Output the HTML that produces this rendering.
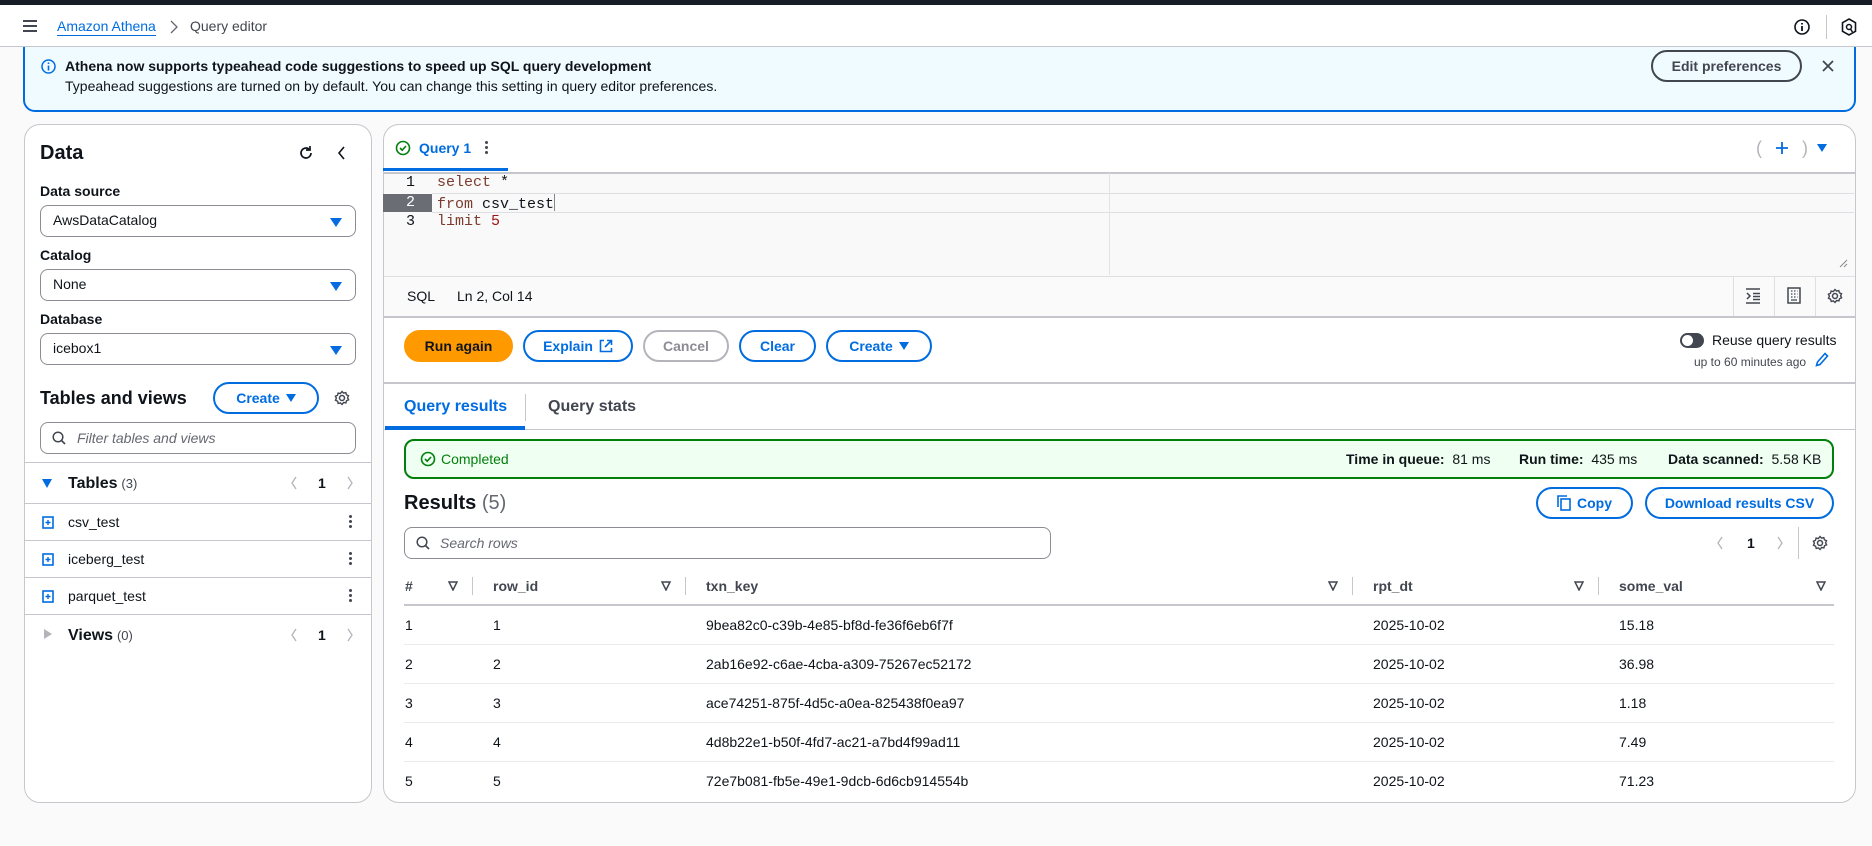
<!DOCTYPE html>
<html><head><meta charset="utf-8">
<style>
*{box-sizing:border-box;margin:0;padding:0}
body{width:1872px;height:846px;background:#fafafa;font-family:"Liberation Sans",sans-serif;font-size:14px;color:#0f141a;position:relative;overflow:hidden}
.a{position:absolute}
.t{position:absolute;white-space:nowrap;line-height:18px}
.b{font-weight:bold}
.blue{color:#006ce0}
.btn{position:absolute;border:2px solid #006ce0;border-radius:20px;color:#006ce0;font-weight:bold;display:flex;align-items:center;justify-content:center;gap:6px;background:#fff}
.sel{position:absolute;left:40px;width:316px;height:32px;border:1px solid #8c8c94;border-radius:8px;background:#fff}
.sel span{position:absolute;left:12px;top:6px}
.caret{position:absolute;width:0;height:0;border-left:6px solid transparent;border-right:6px solid transparent;border-top:9px solid #006ce0}
.hl{position:absolute;height:1px;background:#c6c6cd}
.mono{font-family:"Liberation Mono",monospace}
</style></head><body>
<div class="a" style="left:0;top:0;width:1872px;height:5px;background:#161d26"></div>
<div class="a" style="left:0;top:5px;width:1872px;height:42px;background:#fff;border-bottom:1px solid #c6c6cd"></div>
<!-- hamburger -->
<div class="a" style="left:23px;top:20px;width:14px;height:2px;background:#424650;box-shadow:0 5px 0 #424650,0 10px 0 #424650"></div>
<div class="t blue" style="left:57px;top:17px;border-bottom:1px solid #006ce0">Amazon Athena</div>
<svg class="a" style="left:169px;top:20px" width="10" height="14"><path d="M2 1l6 6-6 6" fill="none" stroke="#656871" stroke-width="1.3"/></svg>
<div class="t" style="left:190px;top:17px;color:#424650">Query editor</div>
<svg class="a" style="left:1794px;top:19px" width="16" height="16"><circle cx="8" cy="8" r="7" fill="none" stroke="#0f141a" stroke-width="1.6"/><path d="M8 7v5M8 4v1.5" stroke="#0f141a" stroke-width="1.8"/></svg>
<div class="a" style="left:1826px;top:15px;width:1px;height:24px;background:#c6c6cd"></div>
<svg class="a" style="left:1841px;top:18px" width="16" height="18"><path d="M8 1l6.5 3.7v8.6L8 17l-6.5-3.7V4.7z" fill="none" stroke="#0f141a" stroke-width="1.6"/><circle cx="8" cy="9" r="2.5" fill="none" stroke="#0f141a" stroke-width="1.5"/><path d="M9.5 11l2 3" stroke="#0f141a" stroke-width="1.5"/></svg>

<!-- banner -->
<div class="a" style="left:23px;top:36px;width:1833px;height:76px;background:#f0fbff;border:2px solid #006ce0;border-radius:12px"></div>
<div class="a" style="left:0;top:6px;width:1872px;height:41px;background:#fff;border-bottom:1px solid #c6c6cd"></div>
<div class="a" style="left:0;top:0;width:1872px;height:5px;background:#161d26"></div>
<div class="a" style="left:23px;top:20px;width:14px;height:2px;background:#424650;box-shadow:0 5px 0 #424650,0 10px 0 #424650"></div>
<div class="t blue" style="left:57px;top:17px;border-bottom:1px solid #006ce0">Amazon Athena</div>
<svg class="a" style="left:169px;top:20px" width="10" height="14"><path d="M2 1l6 6-6 6" fill="none" stroke="#656871" stroke-width="1.3"/></svg>
<div class="t" style="left:190px;top:17px;color:#424650">Query editor</div>
<svg class="a" style="left:1794px;top:19px" width="16" height="16"><circle cx="8" cy="8" r="7" fill="none" stroke="#0f141a" stroke-width="1.6"/><path d="M8 7v5M8 4v1.5" stroke="#0f141a" stroke-width="1.8"/></svg>
<div class="a" style="left:1826px;top:15px;width:1px;height:24px;background:#c6c6cd"></div>
<svg class="a" style="left:1841px;top:18px" width="16" height="18"><path d="M8 1l6.5 3.7v8.6L8 17l-6.5-3.7V4.7z" fill="none" stroke="#0f141a" stroke-width="1.6"/><circle cx="8" cy="9" r="2.5" fill="none" stroke="#0f141a" stroke-width="1.5"/><path d="M9.5 11l2 3" stroke="#0f141a" stroke-width="1.5"/></svg>

<svg class="a" style="left:41px;top:59px" width="15" height="15"><circle cx="7.5" cy="7.5" r="6.5" fill="none" stroke="#006ce0" stroke-width="1.5"/><path d="M7.5 6.5v5M7.5 3.5v1.5" stroke="#006ce0" stroke-width="1.6"/></svg>
<div class="t b" style="left:65px;top:57px">Athena now supports typeahead code suggestions to speed up SQL query development</div>
<div class="t" style="left:65px;top:77px">Typeahead suggestions are turned on by default. You can change this setting in query editor preferences.</div>
<div class="btn" style="left:1651px;top:50px;width:151px;height:32px;border-color:#424650;color:#424650;background:transparent">Edit preferences</div>
<svg class="a" style="left:1822px;top:60px" width="12" height="12"><path d="M1 1l10 10M11 1L1 11" stroke="#424650" stroke-width="1.8"/></svg>

<!-- left panel -->
<div class="a" style="left:24px;top:124px;width:348px;height:679px;background:#fff;border:1px solid #c6c6cd;border-radius:16px"></div>
<div class="t b" style="left:40px;top:141px;font-size:20px;line-height:24px">Data</div>
<svg class="a" style="left:298px;top:145px" width="16" height="16"><path d="M13 8a5 5 0 1 1-2-4" fill="none" stroke="#0f141a" stroke-width="1.7"/><path d="M12 1v4H8" fill="none" stroke="#0f141a" stroke-width="1.7"/></svg>
<svg class="a" style="left:337px;top:146px" width="10" height="14"><path d="M7 1L2 7l5 6" fill="none" stroke="#0f141a" stroke-width="1.6"/></svg>
<div class="t b" style="left:40px;top:182px">Data source</div>
<div class="sel" style="top:205px"><span>AwsDataCatalog</span><i class="caret" style="left:289px;top:12px"></i></div>
<div class="t b" style="left:40px;top:246px">Catalog</div>
<div class="sel" style="top:269px"><span>None</span><i class="caret" style="left:289px;top:12px"></i></div>
<div class="t b" style="left:40px;top:310px">Database</div>
<div class="sel" style="top:333px"><span>icebox1</span><i class="caret" style="left:289px;top:12px"></i></div>
<div class="t b" style="left:40px;top:387px;font-size:18px;line-height:22px">Tables and views</div>
<div class="btn" style="left:213px;top:382px;width:106px;height:32px">Create <i class="caret" style="position:static;border-left-width:5px;border-right-width:5px;border-top-width:8px"></i></div>
<svg class="a" style="left:334px;top:390px" width="16" height="16"><circle cx="8" cy="8" r="2.5" fill="none" stroke="#424650" stroke-width="1.5"/><path d="M8 1.5l1.6 1.6 2.2-.5.6 2.2 2.1.9-.9 2.1 1 2-2.1.9-.6 2.2-2.2-.5L8 14.5l-1.6-1.6-2.2.5-.6-2.2-2.1-.9.9-2.1-1-2 2.1-.9.6-2.2 2.2.5z" fill="none" stroke="#424650" stroke-width="1.4"/></svg>
<div class="sel" style="top:422px;height:32px"></div>
<svg class="a" style="left:52px;top:431px" width="14" height="14"><circle cx="6" cy="6" r="4.8" fill="none" stroke="#424650" stroke-width="1.5"/><path d="M9.5 9.5l3.5 3.5" stroke="#424650" stroke-width="1.6"/></svg>
<div class="t" style="left:77px;top:429px;font-style:italic;color:#656871">Filter tables and views</div>
<div class="hl" style="left:25px;top:462px;width:346px"></div>
<i class="caret" style="left:42px;top:479px;border-left-width:5px;border-right-width:5px;border-top-width:9px"></i>
<div class="t" style="left:68px;top:474px"><b style="font-size:16px">Tables</b> <span style="color:#424650;font-size:13px">(3)</span></div>
<svg class="a" style="left:290px;top:476px" width="8" height="14"><path d="M6 1L2 7l4 6" fill="none" stroke="#b4b4bb" stroke-width="1.3"/></svg>
<div class="t b" style="left:318px;top:474px">1</div>
<svg class="a" style="left:346px;top:476px" width="8" height="14"><path d="M2 1l4 6-4 6" fill="none" stroke="#b4b4bb" stroke-width="1.3"/></svg>
<div class="hl" style="left:25px;top:503px;width:346px"></div>
<div class="hl" style="left:25px;top:540px;width:346px"></div>
<div class="hl" style="left:25px;top:577px;width:346px"></div>
<div class="hl" style="left:25px;top:614px;width:346px"></div>
<!-- table rows -->
<svg class="a" style="left:42px;top:516px" width="12" height="13"><rect x="1" y="1" width="10" height="11" fill="none" stroke="#006ce0" stroke-width="1.6"/><path d="M6 4v5M3.5 6.5h5" stroke="#006ce0" stroke-width="1.4"/></svg>
<div class="t" style="left:68px;top:513px">csv_test</div>
<div class="a" style="left:349px;top:515px;width:3px;height:3px;background:#424650;border-radius:50%;box-shadow:0 5px 0 #424650,0 10px 0 #424650"></div>
<svg class="a" style="left:42px;top:553px" width="12" height="13"><rect x="1" y="1" width="10" height="11" fill="none" stroke="#006ce0" stroke-width="1.6"/><path d="M6 4v5M3.5 6.5h5" stroke="#006ce0" stroke-width="1.4"/></svg>
<div class="t" style="left:68px;top:550px">iceberg_test</div>
<div class="a" style="left:349px;top:552px;width:3px;height:3px;background:#424650;border-radius:50%;box-shadow:0 5px 0 #424650,0 10px 0 #424650"></div>
<svg class="a" style="left:42px;top:590px" width="12" height="13"><rect x="1" y="1" width="10" height="11" fill="none" stroke="#006ce0" stroke-width="1.6"/><path d="M6 4v5M3.5 6.5h5" stroke="#006ce0" stroke-width="1.4"/></svg>
<div class="t" style="left:68px;top:587px">parquet_test</div>
<div class="a" style="left:349px;top:589px;width:3px;height:3px;background:#424650;border-radius:50%;box-shadow:0 5px 0 #424650,0 10px 0 #424650"></div>
<i class="a" style="left:44px;top:629px;border-top:5px solid transparent;border-bottom:5px solid transparent;border-left:8px solid #b4b4bb"></i>
<div class="t" style="left:68px;top:626px"><b style="font-size:16px">Views</b> <span style="color:#424650;font-size:13px">(0)</span></div>
<svg class="a" style="left:290px;top:628px" width="8" height="14"><path d="M6 1L2 7l4 6" fill="none" stroke="#b4b4bb" stroke-width="1.3"/></svg>
<div class="t b" style="left:318px;top:626px">1</div>
<svg class="a" style="left:346px;top:628px" width="8" height="14"><path d="M2 1l4 6-4 6" fill="none" stroke="#b4b4bb" stroke-width="1.3"/></svg>

<!-- right panel -->
<div class="a" style="left:383px;top:124px;width:1473px;height:679px;background:#fff;border:1px solid #c6c6cd;border-radius:16px;overflow:hidden">
  <div class="a" style="left:0;top:47px;width:1473px;height:104px;background:#f9f9f9;border-top:2px solid #c6c6cd"></div>
  <div class="a" style="left:0;top:151px;width:1473px;height:42px;background:#fafafa;border-top:1px solid #dedee3;border-bottom:2px solid #c6c6cd"></div>
</div>
<!-- tab -->
<svg class="a" style="left:395px;top:140px" width="16" height="16"><circle cx="8" cy="8" r="6.5" fill="none" stroke="#037f0c" stroke-width="1.6"/><path d="M5 8l2.2 2.2L11 6" fill="none" stroke="#037f0c" stroke-width="1.6"/></svg>
<div class="t b blue" style="left:419px;top:139px">Query 1</div>
<div class="a" style="left:485px;top:141px;width:3px;height:3px;background:#424650;border-radius:50%;box-shadow:0 5px 0 #424650,0 10px 0 #424650"></div>
<div class="a" style="left:383px;top:168px;width:125px;height:3px;background:#006ce0"></div>
<div class="t" style="left:1756px;top:137px;color:#b4b4bb;font-size:18px;line-height:22px">(</div>
<svg class="a" style="left:1775px;top:141px" width="14" height="14"><path d="M7 1v12M1 7h12" stroke="#006ce0" stroke-width="1.8"/></svg>
<div class="t" style="left:1802px;top:137px;color:#b4b4bb;font-size:18px;line-height:22px">)</div>
<i class="caret" style="left:1817px;top:144px;border-left-width:5px;border-right-width:5px;border-top-width:8px"></i>
<!-- editor -->
<div class="a" style="left:432px;top:193px;width:1422px;height:1px;background:#dedee3"></div>
<div class="a" style="left:432px;top:212px;width:1422px;height:1px;background:#dedee3"></div>
<div class="a" style="left:1109px;top:173px;width:1px;height:102px;background:#e3e3e6"></div>
<div class="a" style="left:383px;top:194px;width:49px;height:18px;background:#6b6d75"></div>
<div class="a" style="left:383px;top:173px;width:49px;height:102px;background:#f4f4f4;z-index:-1"></div>
<div class="t mono" style="left:406px;top:174px;font-size:15px">1</div>
<div class="t mono" style="left:406px;top:194px;font-size:15px;color:#fff">2</div>
<div class="t mono" style="left:406px;top:213px;font-size:15px">3</div>
<div class="t mono" style="left:437px;top:174px;font-size:15px"><span style="color:#7b3b2e">select</span> *</div>
<div class="t mono" style="left:437px;top:194px;font-size:15px"><span style="color:#7b3b2e">from</span> csv_test<span style="display:inline-block;width:1px;height:17px;background:#888;vertical-align:-3px"></span></div>
<div class="t mono" style="left:437px;top:213px;font-size:15px"><span style="color:#7b3b2e">limit</span> <span style="color:#a31515">5</span></div>
<svg class="a" style="left:1838px;top:258px" width="10" height="10"><path d="M9 2L2 9M9 6L6 9" stroke="#888" stroke-width="1"/></svg>
<div class="t" style="left:407px;top:287px">SQL</div>
<div class="t" style="left:457px;top:287px">Ln 2, Col 14</div>
<div class="a" style="left:1733px;top:276px;width:1px;height:40px;background:#dedee3"></div>
<div class="a" style="left:1774px;top:276px;width:1px;height:40px;background:#dedee3"></div>
<div class="a" style="left:1815px;top:276px;width:1px;height:40px;background:#dedee3"></div>
<svg class="a" style="left:1745px;top:288px" width="16" height="16"><path d="M1 1h14M1 15h14M8 5.5h7M8 8.5h7M8 11.5h7M2 5l3 3-3 3" fill="none" stroke="#424650" stroke-width="1.5"/></svg>
<svg class="a" style="left:1787px;top:287px" width="14" height="17"><rect x="1" y="1" width="12" height="15" fill="none" stroke="#424650" stroke-width="1.5"/><path d="M4 4h1.5M7 4h1.5M10 4h.5M4 7h1.5M7 7h1.5M10 7h.5M4 10h1.5M7 10h1.5M10 10h.5M4 13h6" stroke="#424650" stroke-width="1.3"/></svg>
<svg class="a" style="left:1827px;top:288px" width="16" height="16"><circle cx="8" cy="8" r="2.5" fill="none" stroke="#424650" stroke-width="1.5"/><path d="M8 1.5l1.6 1.6 2.2-.5.6 2.2 2.1.9-.9 2.1 1 2-2.1.9-.6 2.2-2.2-.5L8 14.5l-1.6-1.6-2.2.5-.6-2.2-2.1-.9.9-2.1-1-2 2.1-.9.6-2.2 2.2.5z" fill="none" stroke="#424650" stroke-width="1.4"/></svg>
<!-- buttons -->
<div class="btn" style="left:404px;top:330px;width:109px;height:32px;background:#ff9900;border-color:#ff9900;color:#0f141a">Run again</div>
<div class="btn" style="left:523px;top:330px;width:110px;height:32px">Explain <svg width="14" height="14"><path d="M5 1.5H1.5v11h11V9M8 1.5h4.5V6M12.5 1.5L6 8" fill="none" stroke="#006ce0" stroke-width="1.6"/></svg></div>
<div class="btn" style="left:643px;top:330px;width:86px;height:32px;border-color:#b4b4bb;color:#8c8c94">Cancel</div>
<div class="btn" style="left:739px;top:330px;width:77px;height:32px">Clear</div>
<div class="btn" style="left:826px;top:330px;width:106px;height:32px">Create <i class="caret" style="position:static;border-left-width:5px;border-right-width:5px;border-top-width:8px"></i></div>
<div class="a" style="left:1680px;top:333px;width:24px;height:15px;border-radius:8px;background:#424650"></div>
<div class="a" style="left:1682px;top:335px;width:11px;height:11px;border-radius:50%;background:#fff"></div>
<div class="t" style="left:1712px;top:331px">Reuse query results</div>
<div class="t" style="left:1694px;top:353px;font-size:12px;color:#424650">up to 60 minutes ago</div>
<svg class="a" style="left:1815px;top:352px" width="14" height="15"><path d="M10 1.5l2.5 2.5L5 12.5 1.5 13.5 2.5 10z" fill="none" stroke="#006ce0" stroke-width="1.6"/></svg>
<div class="a" style="left:384px;top:382px;width:1471px;height:2px;background:#c6c6cd"></div>
<!-- result tabs -->
<div class="t b blue" style="left:404px;top:398px;font-size:16px">Query results</div>
<div class="a" style="left:525px;top:394px;width:1px;height:27px;background:#c6c6cd"></div>
<div class="t b" style="left:548px;top:398px;font-size:16px;color:#424650">Query stats</div>
<div class="a" style="left:384px;top:429px;width:1471px;height:1px;background:#c6c6cd"></div>
<div class="a" style="left:385px;top:426px;width:140px;height:4px;background:#006ce0"></div>
<!-- completed -->
<div class="a" style="left:404px;top:439px;width:1430px;height:40px;background:#effff1;border:2px solid #037f0c;border-radius:10px"></div>
<svg class="a" style="left:420px;top:451px" width="16" height="16"><circle cx="8" cy="8" r="6.5" fill="none" stroke="#037f0c" stroke-width="1.6"/><path d="M5 8l2.2 2.2L11 6" fill="none" stroke="#037f0c" stroke-width="1.6"/></svg>
<div class="t" style="left:441px;top:450px;color:#037f0c">Completed</div>
<div class="t" style="left:1346px;top:450px"><b>Time in queue:</b>&nbsp; 81 ms</div>
<div class="t" style="left:1519px;top:450px"><b>Run time:</b>&nbsp; 435 ms</div>
<div class="t" style="left:1668px;top:450px"><b>Data scanned:</b>&nbsp; 5.58 KB</div>
<div class="t b" style="left:404px;top:491px;font-size:20px;line-height:24px">Results <span style="font-weight:normal;color:#656871">(5)</span></div>
<div class="btn" style="left:1536px;top:487px;width:97px;height:32px"><svg width="14" height="16"><rect x="4" y="4" width="9" height="11" fill="none" stroke="#006ce0" stroke-width="1.6"/><path d="M1 12V1h9" fill="none" stroke="#006ce0" stroke-width="1.6"/></svg>Copy</div>
<div class="btn" style="left:1645px;top:487px;width:189px;height:32px">Download results CSV</div>
<div class="a" style="left:404px;top:527px;width:647px;height:32px;border:1px solid #8c8c94;border-radius:8px;background:#fff"></div>
<svg class="a" style="left:416px;top:536px" width="14" height="14"><circle cx="6" cy="6" r="4.8" fill="none" stroke="#424650" stroke-width="1.5"/><path d="M9.5 9.5l3.5 3.5" stroke="#424650" stroke-width="1.6"/></svg>
<div class="t" style="left:440px;top:534px;font-style:italic;color:#656871">Search rows</div>
<svg class="a" style="left:1716px;top:536px" width="8" height="14"><path d="M6 1L2 7l4 6" fill="none" stroke="#b4b4bb" stroke-width="1.3"/></svg>
<div class="t b" style="left:1747px;top:534px">1</div>
<svg class="a" style="left:1776px;top:536px" width="8" height="14"><path d="M2 1l4 6-4 6" fill="none" stroke="#b4b4bb" stroke-width="1.3"/></svg>
<div class="a" style="left:1798px;top:527px;width:1px;height:32px;background:#c6c6cd"></div>
<svg class="a" style="left:1812px;top:535px" width="16" height="16"><circle cx="8" cy="8" r="2.5" fill="none" stroke="#424650" stroke-width="1.5"/><path d="M8 1.5l1.6 1.6 2.2-.5.6 2.2 2.1.9-.9 2.1 1 2-2.1.9-.6 2.2-2.2-.5L8 14.5l-1.6-1.6-2.2.5-.6-2.2-2.1-.9.9-2.1-1-2 2.1-.9.6-2.2 2.2.5z" fill="none" stroke="#424650" stroke-width="1.4"/></svg>
<!-- table header -->
<div class="t b" style="left:405px;top:577px;color:#424650">#</div>
<div class="t b" style="left:493px;top:577px;color:#424650">row_id</div>
<div class="t b" style="left:706px;top:577px;color:#424650">txn_key</div>
<div class="t b" style="left:1373px;top:577px;color:#424650">rpt_dt</div>
<div class="t b" style="left:1619px;top:577px;color:#424650">some_val</div>
<svg class="a" style="left:448px;top:581px" width="10" height="10"><path d="M1 1h8L5 9z" fill="none" stroke="#424650" stroke-width="1.5"/></svg>
<svg class="a" style="left:661px;top:581px" width="10" height="10"><path d="M1 1h8L5 9z" fill="none" stroke="#424650" stroke-width="1.5"/></svg>
<svg class="a" style="left:1328px;top:581px" width="10" height="10"><path d="M1 1h8L5 9z" fill="none" stroke="#424650" stroke-width="1.5"/></svg>
<svg class="a" style="left:1574px;top:581px" width="10" height="10"><path d="M1 1h8L5 9z" fill="none" stroke="#424650" stroke-width="1.5"/></svg>
<svg class="a" style="left:1816px;top:581px" width="10" height="10"><path d="M1 1h8L5 9z" fill="none" stroke="#424650" stroke-width="1.5"/></svg>
<div class="a" style="left:472px;top:577px;width:1px;height:18px;background:#c6c6cd"></div>
<div class="a" style="left:685px;top:577px;width:1px;height:18px;background:#c6c6cd"></div>
<div class="a" style="left:1352px;top:577px;width:1px;height:18px;background:#c6c6cd"></div>
<div class="a" style="left:1598px;top:577px;width:1px;height:18px;background:#c6c6cd"></div>
<div class="a" style="left:404px;top:604px;width:1430px;height:2px;background:#c6c6cd"></div>
<div class="a" style="left:404px;top:644px;width:1430px;height:1px;background:#e9ebed"></div>
<div class="a" style="left:404px;top:683px;width:1430px;height:1px;background:#e9ebed"></div>
<div class="a" style="left:404px;top:722px;width:1430px;height:1px;background:#e9ebed"></div>
<div class="a" style="left:404px;top:761px;width:1430px;height:1px;background:#e9ebed"></div>
<div class="t" style="left:405px;top:616px">1</div><div class="t" style="left:493px;top:616px">1</div><div class="t" style="left:706px;top:616px">9bea82c0-c39b-4e85-bf8d-fe36f6eb6f7f</div><div class="t" style="left:1373px;top:616px">2025-10-02</div><div class="t" style="left:1619px;top:616px">15.18</div>
<div class="t" style="left:405px;top:655px">2</div><div class="t" style="left:493px;top:655px">2</div><div class="t" style="left:706px;top:655px">2ab16e92-c6ae-4cba-a309-75267ec52172</div><div class="t" style="left:1373px;top:655px">2025-10-02</div><div class="t" style="left:1619px;top:655px">36.98</div>
<div class="t" style="left:405px;top:694px">3</div><div class="t" style="left:493px;top:694px">3</div><div class="t" style="left:706px;top:694px">ace74251-875f-4d5c-a0ea-825438f0ea97</div><div class="t" style="left:1373px;top:694px">2025-10-02</div><div class="t" style="left:1619px;top:694px">1.18</div>
<div class="t" style="left:405px;top:733px">4</div><div class="t" style="left:493px;top:733px">4</div><div class="t" style="left:706px;top:733px">4d8b22e1-b50f-4fd7-ac21-a7bd4f99ad11</div><div class="t" style="left:1373px;top:733px">2025-10-02</div><div class="t" style="left:1619px;top:733px">7.49</div>
<div class="t" style="left:405px;top:772px">5</div><div class="t" style="left:493px;top:772px">5</div><div class="t" style="left:706px;top:772px">72e7b081-fb5e-49e1-9dcb-6d6cb914554b</div><div class="t" style="left:1373px;top:772px">2025-10-02</div><div class="t" style="left:1619px;top:772px">71.23</div>
</body></html>
